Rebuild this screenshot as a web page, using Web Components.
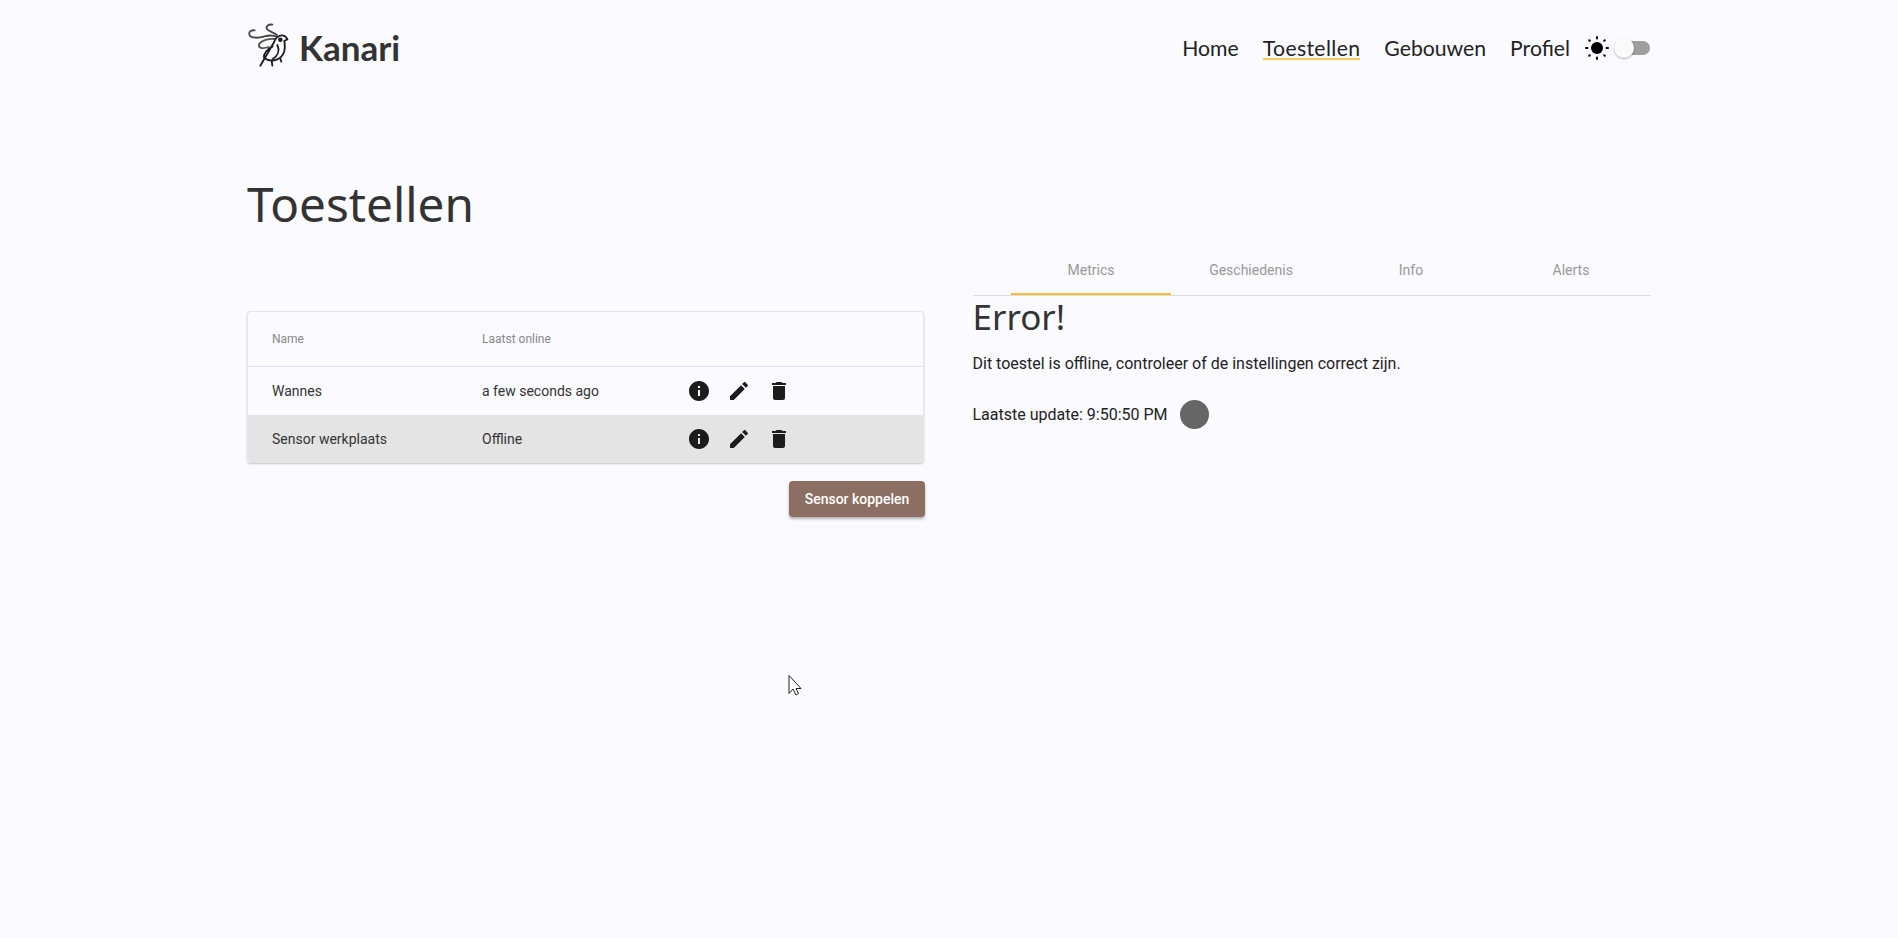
<!DOCTYPE html>
<html lang="nl">
<head>
<meta charset="utf-8">
<title>Kanari</title>
<style>
  html, body { margin: 0; height: 100%; background: #fafaff; }
  body { font-family: Roboto, "Liberation Sans", sans-serif; color: #333; }
</style>
</head>
<body>
<kanari-app>
  <kanari-header slot="header"></kanari-header>
  <h1 slot="title">Toestellen</h1>
  <device-table slot="left">
    <device-row name="Wannes" seen="a few seconds ago"></device-row>
    <device-row name="Sensor werkplaats" seen="Offline" selected></device-row>
  </device-table>
  <device-panel slot="right" updated="9:50:50 PM"></device-panel>
</kanari-app>
<mouse-pointer></mouse-pointer>

<script>
class KanariApp extends HTMLElement {
  constructor() {
    super();
    this.attachShadow({ mode: 'open' });
    this.shadowRoot.innerHTML = `
    <style>
      :host { display: block; width: 1403px; margin-left: 247px; }
      ::slotted(h1) {
        margin: 0 0 15px;
        padding-top: 80px;
        font: 400 47.7px/56px "Noto Sans", sans-serif;
        color: #333;
      }
      .columns {
        display: grid;
        grid-template-columns: 678px 678.5px;
        column-gap: 47.5px;
      }
    </style>
    <slot name="header"></slot>
    <slot name="title"></slot>
    <div class="columns">
      <slot name="left"></slot>
      <slot name="right"></slot>
    </div>
    `;
  }
}

class KanariHeader extends HTMLElement {
  constructor() {
    super();
    this.attachShadow({ mode: 'open' });
    this.shadowRoot.innerHTML = `
    <style>
      :host { display: flex; align-items: center; height: 96px; }
      .brand {
        display: flex;
        align-items: center;
        font: 700 35px Lato, sans-serif;
        color: #333;
        margin-right: auto;
      }
      .brand svg { margin: -2px 1px 0 -9px; }
      .brand span { margin-top: -2px; }
      nav { display: flex; gap: 24px; font: 400 21.2px/24px Lato, sans-serif; color: #222; }
      .active { box-shadow: inset 0 -2px 0 #ffc95f; letter-spacing: 0.36px; }
      .sun { margin-left: 15px; }
      .toggle { position: relative; width: 34px; height: 14px; margin-left: 7px; border-radius: 7px; background: #9e9e9e; }
      .thumb {
        position: absolute; left: -2px; top: -3px;
        width: 20px; height: 20px; border-radius: 50%;
        background: #fafafa;
        box-shadow: 0 1px 2px rgba(0,0,0,0.3);
      }
    </style>
    <div class="brand">
      <svg width="60" height="60" viewBox="0 0 180 180" fill="none" stroke="#1c1c1c" stroke-width="5.5" stroke-linecap="round">
        <path d="M50 40C38 38 31 46 35 55C40 64 60 64 80 58C95 54 110 56 119 60" stroke="#444"/>
        <path d="M103 23C90 21 83 28 87 36C92 44 105 44 117 54" stroke="#444"/>
        <path d="M112 66C92 64 70 70 63 82C60 92 72 97 92 90" stroke="#555"/>
        <path d="M67 146L108 76C112 64 122 54 134 55C142 56 146 62 148 67L139 72C143 95 138 118 118 127C104 133 88 130 78 122C76 110 88 96 104 88"/>
        <circle cx="127" cy="68" r="4" fill="#1c1c1c"/>
        <path d="M118 84C126 100 120 116 104 126"/>
        <path d="M101 130L103 146M127 125L130 134"/>
      </svg>
      <span>Kanari</span>
    </div>
    <nav>
      <span>Home</span>
      <span class="active">Toestellen</span>
      <span>Gebouwen</span>
      <span>Profiel</span>
    </nav>
    <svg class="sun" width="24" height="24" viewBox="0 0 24 24" fill="#000">
      <circle cx="12" cy="12" r="6"/>
      <g stroke="#000" stroke-width="2" stroke-linecap="round">
        <path d="M12 1v1.5M12 21.5V23M1 12h1.5M21.5 12H23M4.2 4.2l.6.6M19.2 19.2l.6.6M4.2 19.8l.6-.6M19.2 4.8l.6-.6"/>
      </g>
    </svg>
    <div class="toggle"><div class="thumb"></div></div>
    `;
  }
}

class DeviceTable extends HTMLElement {
  constructor() {
    super();
    this.attachShadow({ mode: 'open' });
    this.shadowRoot.innerHTML = `
    <style>
      :host { display: block; padding-top: 64px; }
      .card {
        width: 677px;
        box-sizing: border-box;
        border: 1px solid #e4e4e8;
        border-bottom: 0;
        border-radius: 4px;
        overflow: hidden;
        box-shadow: 0 1px 2px rgba(0,0,0,0.22);
      }
      .head {
        display: grid;
        grid-template-columns: 210px 1fr;
        align-items: center;
        height: 54px;
        padding-left: 24px;
        border-bottom: 1px solid #e2e2e6;
        font-size: 12px;
        color: #888;
      }
      .actions { display: flex; justify-content: flex-end; margin-top: 18px; }
      button {
        width: 136px; height: 36px;
        border: 0; border-radius: 4px;
        background: #8d6e63;
        color: #fff;
        font: 500 14px Roboto, sans-serif;
        box-shadow: 0 2px 3px rgba(0,0,0,0.3);
      }
    </style>
    <div class="card">
      <div class="head"><span>Name</span><span>Laatst online</span></div>
      <slot></slot>
    </div>
    <div class="actions"><button>Sensor koppelen</button></div>
    `;
  }
}

class DeviceRow extends HTMLElement {
  constructor() {
    super();
    this.attachShadow({ mode: 'open' });
    this.shadowRoot.innerHTML = `
    <style>
      :host {
        display: grid;
        grid-template-columns: 210px 205px 1fr;
        align-items: center;
        height: 48px;
        padding-left: 24px;
        font-size: 14px;
        color: #333;
      }
      :host([selected]) { background: #e4e4e4; }
      .icons { display: flex; gap: 16px; }
      svg { display: block; fill: #1c1c1c; }
    </style>
    <span class="name"></span>
    <span class="seen"></span>
    <div class="icons">
      <svg width="24" height="24" viewBox="0 0 24 24"><path d="M12 2C6.48 2 2 6.48 2 12s4.48 10 10 10 10-4.48 10-10S17.52 2 12 2zm1 15h-2v-6h2v6zm0-8h-2V7h2v2z"/></svg>
      <svg width="24" height="24" viewBox="0 0 24 24"><path d="M3 17.25V21h3.75L17.81 9.94l-3.75-3.75L3 17.25zM20.71 7.04c.39-.39.39-1.02 0-1.41l-2.34-2.34c-.39-.39-1.02-.39-1.41 0l-1.83 1.83 3.75 3.75 1.83-1.83z"/></svg>
      <svg width="24" height="24" viewBox="0 0 24 24"><path d="M6 19c0 1.1.9 2 2 2h8c1.1 0 2-.9 2-2V7H6v12zM19 4h-3.5l-1-1h-5l-1 1H5v2h14V4z"/></svg>
    </div>
    `;
  }

  connectedCallback() {
    this.shadowRoot.querySelector('.name').textContent = this.getAttribute('name');
    this.shadowRoot.querySelector('.seen').textContent = this.getAttribute('seen');
  }
}

class DevicePanel extends HTMLElement {
  constructor() {
    super();
    this.attachShadow({ mode: 'open' });
    this.shadowRoot.innerHTML = `
    <style>
      :host { display: block; }
      .tabs {
        display: grid;
        grid-template-columns: repeat(4, 160px);
        justify-content: end;
        border-bottom: 1px solid #dcdce0;
        font-size: 14px;
        color: #999;
      }
      .tabs span { height: 48px; line-height: 47px; text-align: center; }
      .tabs .on { box-shadow: inset 0 -2px 0 #ffc02d; }
      h2 { margin: -1px 0 0; font: 400 35px/44px "Noto Sans", sans-serif; color: #333; }
      p { margin: 13px 0 0; font-size: 16px; line-height: 24px; color: #222; }
      .status { display: flex; align-items: center; gap: 12px; margin-top: 24px; font-size: 16px; color: #222; }
      .dot { width: 29px; height: 29px; border-radius: 50%; background: #666; }
    </style>
    <div class="tabs">
      <span class="on">Metrics</span>
      <span>Geschiedenis</span>
      <span>Info</span>
      <span>Alerts</span>
    </div>
    <h2>Error!</h2>
    <p>Dit toestel is offline, controleer of de instellingen correct zijn.</p>
    <div class="status"><span class="time"></span><span class="dot"></span></div>
    `;
  }

  connectedCallback() {
    this.shadowRoot.querySelector('.time').textContent = 'Laatste update: ' + this.getAttribute('updated');
  }
}

// the mouse pointer that was caught in the screenshot
class MousePointer extends HTMLElement {
  constructor() {
    super();
    this.attachShadow({ mode: 'open' });
    this.shadowRoot.innerHTML = `
    <style>
      :host { position: absolute; left: 787px; top: 674px; width: 16px; height: 22px; }
      svg { display: block; }
    </style>
    <svg width="16" height="22" viewBox="0 0 16 22"><path d="M2 1.5V19.5L6 15L9 21L11.5 19.5L9 14.5H14Z" fill="#fff" stroke="#222" stroke-width="1"/></svg>
    `;
  }
}

customElements.define('kanari-app', KanariApp);
customElements.define('kanari-header', KanariHeader);
customElements.define('device-table', DeviceTable);
customElements.define('device-row', DeviceRow);
customElements.define('device-panel', DevicePanel);
customElements.define('mouse-pointer', MousePointer);
</script>
</body>
</html>
